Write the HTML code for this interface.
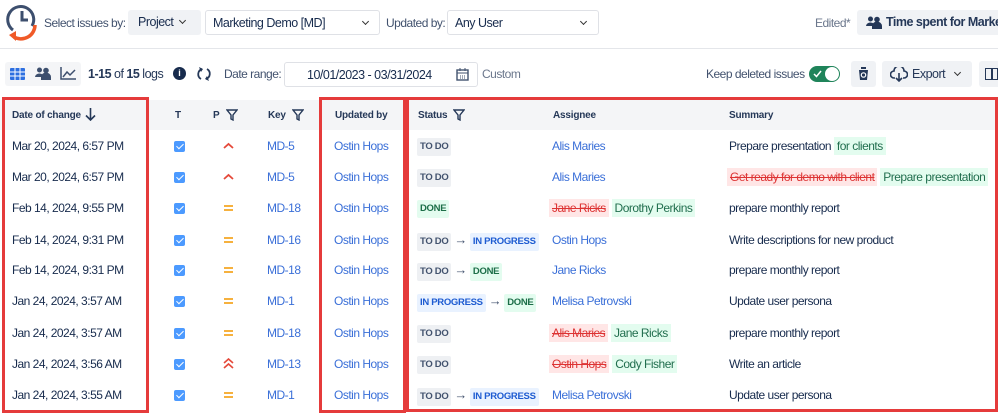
<!DOCTYPE html>
<html><head><meta charset="utf-8"><style>
*{box-sizing:border-box;margin:0;padding:0}
body{width:998px;height:413px;overflow:hidden;background:#fff;font-family:"Liberation Sans",Arial,sans-serif;color:#172b4d;position:relative;font-size:12px;letter-spacing:-0.5px}
.a{position:absolute;white-space:nowrap}
.btn{position:absolute;background:#f0f2f5;border-radius:3px}
.sel{position:absolute;border:1px solid #dfe1e6;border-radius:3px;background:#fff}
.chev{display:inline-block;width:5px;height:5px;border-right:1.5px solid #333;border-bottom:1.5px solid #333;transform:rotate(45deg)}
.hdr{position:absolute;left:0;top:100px;width:998px;height:30px;background:#f4f5f7}
.th{position:absolute;top:110px;font-size:10px;font-weight:bold;color:#253858;letter-spacing:-0.2px}
.row{position:absolute;left:0;width:998px;height:31px}
.row .c{position:absolute;top:8px;font-size:12px;white-space:nowrap}
.lnk{color:#3a6fd8}
.cb{position:absolute;left:174px;top:10px;width:11px;height:11px;background:#4c9aff;border-radius:2px}
.cb:after{content:"";position:absolute;left:3.5px;top:1px;width:3px;height:6px;border-right:1.5px solid #fff;border-bottom:1.5px solid #fff;transform:rotate(45deg)}
.lz{display:inline-block;font-size:9.5px;font-weight:bold;padding:4px 3px;border-radius:2px;letter-spacing:-0.3px;line-height:10px}
.todo{background:#eef0f3;color:#42526e}
.done{background:#e3fcef;color:#1c6e48}
.prog{background:#e9f2ff;color:#1d5bd1}
.arr{font-size:13px;color:#42526e;margin:0 3px}
.del{background:#ffe6e6;color:#d33;text-decoration:line-through;padding:2px 3px}
.add{background:#e3fcef;color:#216e4e;padding:2px 3px}
.red{position:absolute;border:3px solid #e53b3b}
.pr{position:absolute;left:223px;top:11px}
</style></head><body>
<svg class="a" style="left:5px;top:3px" width="34" height="40" viewBox="0 0 34 40">
<path d="M8 27 A13 13 0 1 1 27 23" fill="none" stroke="#3d4f6e" stroke-width="3"/>
<path d="M17 8 V17 H23" fill="none" stroke="#3d4f6e" stroke-width="3"/>
<path d="M30 22 A14 14 0 0 1 9 34" fill="none" stroke="#f05a28" stroke-width="3.5"/>
<path d="M4 32 L11 28 L11 38 Z" fill="#f05a28"/>
</svg>
<div class="a" style="left:44px;top:16px;font-size:12px;color:#42526e">Select issues by:</div>
<div class="btn" style="left:128px;top:10px;width:73px;height:25px"><span class="a" style="left:10px;top:5px;font-size:12.5px">Project</span><span class="chev a" style="left:52px;top:8px"></span></div>
<div class="sel" style="left:205px;top:10px;width:175px;height:25px"><span class="a" style="left:7px;top:5px;font-size:12.5px">Marketing Demo [MD]</span><span class="chev a" style="left:157px;top:8px"></span></div>
<div class="a" style="left:386px;top:16px;color:#42526e">Updated by:</div>
<div class="sel" style="left:447px;top:10px;width:152px;height:25px"><span class="a" style="left:7px;top:5px;font-size:12.5px">Any User</span><span class="chev a" style="left:133px;top:8px"></span></div>
<div class="a" style="left:815px;top:16px;color:#6b778c">Edited*</div>
<div class="btn" style="left:857px;top:10px;width:150px;height:25px">
<svg class="a" style="left:9px;top:6px" width="16" height="13"><circle cx="4.5" cy="3" r="2.5" fill="#253858"/><circle cx="11" cy="3.5" r="2.8" fill="#253858"/><path d="M0 10A4.5 4 0 0 1 8 8V10Z" fill="#253858"/><path d="M6 13V10A5 4.5 0 0 1 16 10V13Z" fill="#253858"/></svg>
<span class="a" style="left:29px;top:5px;font-size:12.5px;font-weight:bold;color:#253858">Time spent for Market...</span></div>
<div class="a" style="left:0;top:48px;width:998px;height:1px;background:#e4e6ea"></div>
<div class="btn" style="left:5px;top:62px;width:76px;height:24px;background:#f4f5f7"></div>
<svg class="a" style="left:10px;top:68px" width="15" height="12"><rect x="0" y="0" width="15" height="12" rx="1" fill="#2d6fe0"/><path d="M0 4H15M0 8H15M5 0V12M10 0V12" stroke="#fff" stroke-width="1"/></svg>
<svg class="a" style="left:35px;top:67px" width="16" height="13"><circle cx="4.5" cy="3" r="2.5" fill="#3d4f6e"/><circle cx="11" cy="3.5" r="2.8" fill="#3d4f6e"/><path d="M0 10A4.5 4 0 0 1 8 8V10Z" fill="#3d4f6e"/><path d="M6 13V10A5 4.5 0 0 1 16 10V13Z" fill="#3d4f6e"/></svg>
<svg class="a" style="left:60px;top:67px" width="17" height="13"><path d="M1 0V12H16" stroke="#3d4f6e" stroke-width="1.5" fill="none"/><path d="M3 10L7 5L10 8L15 3" stroke="#3d4f6e" stroke-width="1.5" fill="none"/></svg>
<div class="a" style="left:88px;top:67px;font-size:12.5px;color:#253858"><b>1-15</b> of <b>15</b> logs</div>
<div class="a" style="left:173px;top:67px;width:13px;height:13px;border-radius:50%;background:#172b4d;color:#fff;font-size:9px;font-weight:bold;text-align:center;line-height:13px;letter-spacing:0">i</div>
<svg class="a" style="left:196px;top:66px" width="16" height="16"><path d="M6 3A5.5 5.5 0 0 0 5 13" fill="none" stroke="#253858" stroke-width="1.8"/><path d="M10 13A5.5 5.5 0 0 0 11 3" fill="none" stroke="#253858" stroke-width="1.8"/><path d="M3 1L7 3L5 6Z M13 15L9 13L11 10Z" fill="#253858"/></svg>
<div class="a" style="left:224px;top:67px;color:#42526e">Date range:</div>
<div class="sel" style="left:284px;top:62px;width:194px;height:25px"><span class="a" style="left:22px;top:5px;font-size:12.5px">10/01/2023 - 03/31/2024</span>
<svg class="a" style="left:171px;top:5px" width="13" height="13"><rect x="1" y="2" width="11" height="10" fill="none" stroke="#42526e" stroke-width="1.4"/><path d="M1 5H12M4 0V3M9 0V3M4 8h1M6 8h1M8 8h1M4 10h1M6 10h1M8 10h1" stroke="#42526e"/></svg></div>
<div class="a" style="left:482px;top:67px;color:#6b778c">Custom</div>
<div class="a" style="left:706px;top:67px;color:#42526e">Keep deleted issues</div>
<div class="a" style="left:809px;top:66px;width:31px;height:16px;border-radius:8px;background:#1f845a"><svg class="a" style="left:4px;top:4px" width="9" height="8"><path d="M1 4L3.5 6.5L8 1" stroke="#fff" stroke-width="1.5" fill="none"/></svg><span class="a" style="left:16px;top:1px;width:14px;height:14px;border-radius:50%;background:#fff"></span></div>
<div class="btn" style="left:851px;top:61px;width:25px;height:26px"><svg class="a" style="left:6px;top:6px" width="13" height="14"><path d="M1 2H12M4 2V0H9V2M2 3H11L10 13H3Z" fill="#253858"/><circle cx="6.5" cy="8" r="2.2" fill="none" stroke="#fff" stroke-width="1.2"/></svg></div>
<div class="btn" style="left:882px;top:61px;width:90px;height:26px"><svg class="a" style="left:8px;top:6px" width="18" height="15"><path d="M5 11H4A3.5 3.5 0 0 1 4 4 A5 5 0 0 1 14 4 A3.5 3.5 0 0 1 14 11H13" fill="none" stroke="#253858" stroke-width="1.6"/><path d="M9 6V14M6 11L9 14L12 11" fill="none" stroke="#253858" stroke-width="1.6"/></svg><span class="a" style="left:30px;top:6px;font-size:12.5px;color:#253858">Export</span><span class="chev a" style="left:73px;top:9px"></span></div>
<div class="btn" style="left:979px;top:61px;width:25px;height:26px"><span class="a" style="left:6px;top:7px;width:13px;height:12px;border:1.6px solid #253858"></span><span class="a" style="left:12px;top:7px;width:1.6px;height:12px;background:#253858"></span></div>
<div class="hdr"></div>
<div class="th" style="left:12px">Date of change</div>
<svg class="a" style="left:85px;top:108px" width="11" height="13"><path d="M5.5 0V12M1 7.5L5.5 12L10 7.5" fill="none" stroke="#253858" stroke-width="1.6"/></svg>
<div class="th" style="left:175px">T</div>
<div class="th" style="left:213px">P</div>
<svg class="a" style="left:226px;top:109px" width="12" height="12"><path d="M1 1H11L7 6V11L5 10V6Z" fill="none" stroke="#253858" stroke-width="1.4"/></svg>
<div class="th" style="left:268px">Key</div>
<svg class="a" style="left:292px;top:109px" width="12" height="12"><path d="M1 1H11L7 6V11L5 10V6Z" fill="none" stroke="#253858" stroke-width="1.4"/></svg>
<div class="th" style="left:335px">Updated by</div>
<div class="th" style="left:418px">Status</div>
<svg class="a" style="left:453px;top:109px" width="12" height="12"><path d="M1 1H11L7 6V11L5 10V6Z" fill="none" stroke="#253858" stroke-width="1.4"/></svg>
<div class="th" style="left:553px">Assignee</div>
<div class="th" style="left:729px">Summary</div>

<div class="row" style="top:131px"><div class="c" style="left:12px">Mar 20, 2024, 6:57 PM</div><div class="cb"></div><svg class="pr" width="11" height="8"><path d="M1 6L5.5 2L10 6" fill="none" stroke="#e5493a" stroke-width="1.8"/></svg><div class="c lnk" style="left:267px">MD-5</div><div class="c lnk" style="left:334px">Ostin Hops</div><div class="c" style="left:417px;top:7px"><span class="lz todo">TO DO</span></div><div class="c lnk" style="left:552px">Alis Maries</div><div class="c" style="left:729px">Prepare presentation <span class="add">for clients</span></div></div>
<div class="row" style="top:162px"><div class="c" style="left:12px">Mar 20, 2024, 6:57 PM</div><div class="cb"></div><svg class="pr" width="11" height="8"><path d="M1 6L5.5 2L10 6" fill="none" stroke="#e5493a" stroke-width="1.8"/></svg><div class="c lnk" style="left:267px">MD-5</div><div class="c lnk" style="left:334px">Ostin Hops</div><div class="c" style="left:417px;top:7px"><span class="lz todo">TO DO</span></div><div class="c lnk" style="left:552px">Alis Maries</div><div class="c" style="left:727px"><span class="del">Get ready for demo with client</span> <span class="add">Prepare presentation</span></div></div>
<div class="row" style="top:193px"><div class="c" style="left:12px">Feb 14, 2024, 9:55 PM</div><div class="cb"></div><svg class="pr" width="11" height="8"><path d="M1 2H10M1 6H10" stroke="#f5a623" stroke-width="1.8"/></svg><div class="c lnk" style="left:267px">MD-18</div><div class="c lnk" style="left:334px">Ostin Hops</div><div class="c" style="left:417px;top:7px"><span class="lz done">DONE</span></div><div class="c" style="left:549px"><span class="del">Jane Ricks</span> <span class="add">Dorothy Perkins</span></div><div class="c" style="left:729px">prepare monthly report</div></div>
<div class="row" style="top:225px"><div class="c" style="left:12px">Feb 14, 2024, 9:31 PM</div><div class="cb"></div><svg class="pr" width="11" height="8"><path d="M1 2H10M1 6H10" stroke="#f5a623" stroke-width="1.8"/></svg><div class="c lnk" style="left:267px">MD-16</div><div class="c lnk" style="left:334px">Ostin Hops</div><div class="c" style="left:417px;top:7px"><span class="lz todo">TO DO</span><span class="arr">&#8594;</span><span class="lz prog">IN PROGRESS</span></div><div class="c lnk" style="left:552px">Ostin Hops</div><div class="c" style="left:729px">Write descriptions for new product</div></div>
<div class="row" style="top:255px"><div class="c" style="left:12px">Feb 14, 2024, 9:31 PM</div><div class="cb"></div><svg class="pr" width="11" height="8"><path d="M1 2H10M1 6H10" stroke="#f5a623" stroke-width="1.8"/></svg><div class="c lnk" style="left:267px">MD-18</div><div class="c lnk" style="left:334px">Ostin Hops</div><div class="c" style="left:417px;top:7px"><span class="lz todo">TO DO</span><span class="arr">&#8594;</span><span class="lz done">DONE</span></div><div class="c lnk" style="left:552px">Jane Ricks</div><div class="c" style="left:729px">prepare monthly report</div></div>
<div class="row" style="top:286px"><div class="c" style="left:12px">Jan 24, 2024, 3:57 AM</div><div class="cb"></div><svg class="pr" width="11" height="8"><path d="M1 2H10M1 6H10" stroke="#f5a623" stroke-width="1.8"/></svg><div class="c lnk" style="left:267px">MD-1</div><div class="c lnk" style="left:334px">Ostin Hops</div><div class="c" style="left:417px;top:7px"><span class="lz prog">IN PROGRESS</span><span class="arr">&#8594;</span><span class="lz done">DONE</span></div><div class="c lnk" style="left:552px">Melisa Petrovski</div><div class="c" style="left:729px">Update user persona</div></div>
<div class="row" style="top:318px"><div class="c" style="left:12px">Jan 24, 2024, 3:57 AM</div><div class="cb"></div><svg class="pr" width="11" height="8"><path d="M1 2H10M1 6H10" stroke="#f5a623" stroke-width="1.8"/></svg><div class="c lnk" style="left:267px">MD-18</div><div class="c lnk" style="left:334px">Ostin Hops</div><div class="c" style="left:417px;top:7px"><span class="lz todo">TO DO</span></div><div class="c" style="left:549px"><span class="del">Alis Maries</span> <span class="add">Jane Ricks</span></div><div class="c" style="left:729px">prepare monthly report</div></div>
<div class="row" style="top:349px"><div class="c" style="left:12px">Jan 24, 2024, 3:56 AM</div><div class="cb"></div><svg class="pr" style="top:9px" width="11" height="11"><path d="M1 5L5.5 1L10 5M1 10L5.5 6L10 10" fill="none" stroke="#e5493a" stroke-width="1.6"/></svg><div class="c lnk" style="left:267px">MD-13</div><div class="c lnk" style="left:334px">Ostin Hops</div><div class="c" style="left:417px;top:7px"><span class="lz todo">TO DO</span></div><div class="c" style="left:549px"><span class="del">Ostin Hops</span> <span class="add">Cody Fisher</span></div><div class="c" style="left:729px">Write an article</div></div>
<div class="row" style="top:380px"><div class="c" style="left:12px">Jan 24, 2024, 3:55 AM</div><div class="cb"></div><svg class="pr" width="11" height="8"><path d="M1 2H10M1 6H10" stroke="#f5a623" stroke-width="1.8"/></svg><div class="c lnk" style="left:267px">MD-1</div><div class="c lnk" style="left:334px">Ostin Hops</div><div class="c" style="left:417px;top:7px"><span class="lz todo">TO DO</span><span class="arr">&#8594;</span><span class="lz prog">IN PROGRESS</span></div><div class="c lnk" style="left:552px">Melisa Petrovski</div><div class="c" style="left:729px">Update user persona</div></div>

<div class="red" style="left:2px;top:97px;width:147px;height:316px"></div>
<div class="red" style="left:319px;top:97px;width:87px;height:316px"></div>
<div class="red" style="left:406px;top:97px;width:592px;height:315px"></div>
</body></html>
